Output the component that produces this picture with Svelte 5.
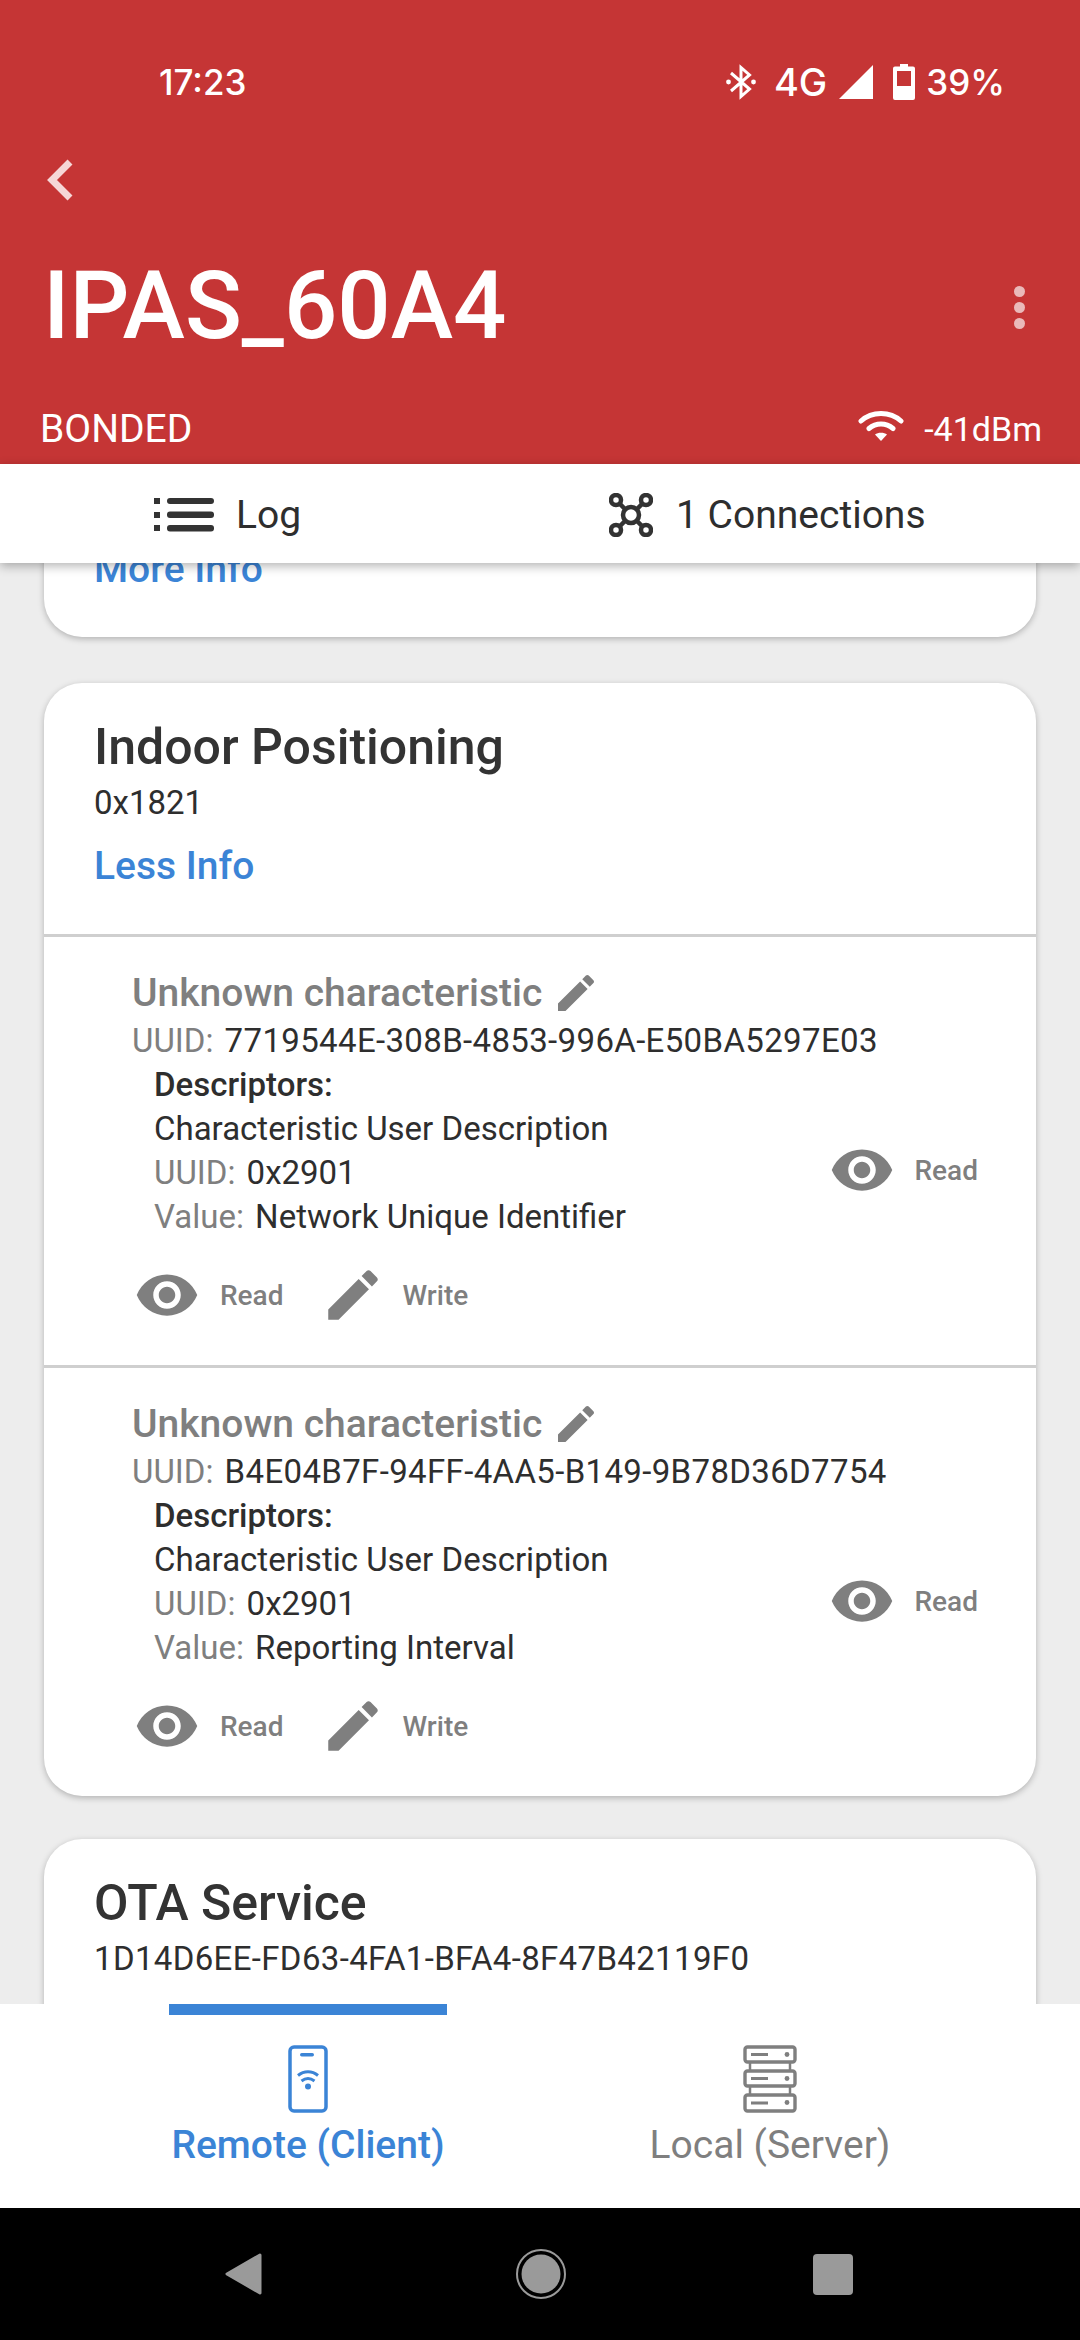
<script>
  const eye = "M12 4.5C7 4.5 2.73 7.61 1 12c1.73 4.39 6 7.5 11 7.5s9.27-3.11 11-7.5c-1.73-4.39-6-7.5-11-7.5zM12 17c-2.76 0-5-2.24-5-5s2.24-5 5-5 5 2.24 5 5-2.24 5-5 5zm0-8c-1.66 0-3 1.34-3 3s1.34 3 3 3 3-1.34 3-3-1.34-3-3-3z";
  const pencil = "M3 17.25V21h3.75L17.81 9.94l-3.75-3.75L3 17.25zM20.71 7.04c.39-.39.39-1.02 0-1.41l-2.34-2.34c-.39-.39-1.02-.39-1.41 0l-1.83 1.83 3.75 3.75 1.83-1.83z";
  const chars = [
    { uuid: "7719544E-308B-4853-996A-E50BA5297E03", value: "Network Unique Identifier" },
    { uuid: "B4E04B7F-94FF-4AA5-B149-9B78D36D7754", value: "Reporting Interval" }
  ];
</script>

<div class="phone">
  <header class="top">
    <div class="status">
      <span class="time">17:23</span>
      <div class="status-right">
        <svg class="bt" viewBox="0 0 30 36" width="30" height="36"><path d="M5 9 23.500 25 15 32.500V3.500L23.500 11 5 27" fill="none" stroke="#fff" stroke-width="3"/><circle cx="2.500" cy="18" r="2.400" fill="#fff"/><circle cx="27.500" cy="18" r="2.400" fill="#fff"/></svg>
        <span class="net">4G</span>
        <svg class="sig" viewBox="0 0 34 34" width="34" height="34"><path d="M0 34 34 0V34z" fill="#fff"/></svg>
        <svg class="bat" viewBox="0 0 22 36" width="22" height="36"><path fill-rule="evenodd" d="M7 0h8v2.500h5a2 2 0 0 1 2 2V34a2 2 0 0 1-2 2H2a2 2 0 0 1-2-2V4.500a2 2 0 0 1 2-2h5zM4 7v15h14V7z" fill="#fff"/></svg>
        <span class="pct">39%</span>
      </div>
    </div>
    <div class="back-row">
      <svg viewBox="0 0 32 44" width="32" height="44"><path d="M26 4 8 22l18 18" fill="none" stroke="#f6d7d7" stroke-width="7"/></svg>
    </div>
    <div class="title-row">
      <h1>IPAS_60A4</h1>
      <div class="dots"><i></i><i></i><i></i></div>
    </div>
    <div class="info-row">
      <span>BONDED</span>
      <div class="rssi">
        <svg viewBox="0 0 46 32" width="46" height="32"><path d="M3 11C14 1 32 1 43 11M11 18.500C18 12.500 28 12.500 35 18.500" fill="none" stroke="#fff" stroke-width="5" stroke-linecap="round"/><path d="M17 24.500C20 22 26 22 29 24.500L23 31z" fill="#fff"/></svg>
        <span>-41dBm</span>
      </div>
    </div>
  </header>

  <div class="actions">
    <div class="action log">
      <svg viewBox="0 0 60 34" width="60" height="34"><g fill="#333"><rect x="0" y="0" width="6" height="6"/><rect x="0" y="14" width="6" height="6"/><rect x="0" y="27" width="6" height="6"/><rect x="13" y="0" width="47" height="6" rx="3"/><rect x="13" y="13.500" width="47" height="6.500" rx="3"/><rect x="13" y="27" width="47" height="6.500" rx="3"/></g></svg>
      <span>Log</span>
    </div>
    <div class="action conn">
      <svg viewBox="0 0 44 44" width="44" height="44"><g fill="none" stroke="#333" stroke-width="4.500"><circle cx="7" cy="7" r="5"/><circle cx="37" cy="7" r="5"/><circle cx="7" cy="37" r="5"/><circle cx="37" cy="37" r="5"/><circle cx="22" cy="22" r="8"/><path d="M11 11l5 5M33 11l-5 5M11 33l5-5M33 33l-5-5"/></g></svg>
      <span>1 Connections</span>
    </div>
  </div>

  <main class="scroll">
    <section class="card first">
      <a class="link">More Info</a>
    </section>

    <section class="card">
      <div class="svc">
        <h2>Indoor Positioning</h2>
        <p class="svc-id">0x1821</p>
        <a class="link">Less Info</a>
      </div>
      {#each chars as c}
        <div class="char">
          <div class="char-name">
            <span>Unknown characteristic</span>
            <svg viewBox="0 0 24 24" width="48" height="48"><path d={pencil}/></svg>
          </div>
          <div class="line"><span class="k">UUID:</span> <span class="hex">{c.uuid}</span></div>
          <div class="desc-wrap">
            <div class="desc">
              <div class="line strong">Descriptors:</div>
              <div class="line">Characteristic User Description</div>
              <div class="line"><span class="k">UUID:</span> 0x2901</div>
              <div class="line"><span class="k">Value:</span> {c.value}</div>
            </div>
            <div class="op right">
              <svg viewBox="0 0 24 24" width="66" height="66"><path fill-rule="evenodd" d={eye}/></svg>
              <span>Read</span>
            </div>
          </div>
          <div class="ops">
            <div class="op">
              <svg viewBox="0 0 24 24" width="66" height="66"><path fill-rule="evenodd" d={eye}/></svg>
              <span>Read</span>
            </div>
            <div class="op wr">
              <svg viewBox="0 0 24 24" width="66" height="66"><path d={pencil}/></svg>
              <span>Write</span>
            </div>
          </div>
        </div>
      {/each}
    </section>

    <section class="card last">
      <div class="svc">
        <h2>OTA Service</h2>
        <p class="svc-id hex">1D14D6EE-FD63-4FA1-BFA4-8F47B42119F0</p>
      </div>
    </section>
  </main>

  <nav class="tabs">
    <div class="tab active">
      <b class="bar"></b>
      <svg viewBox="0 0 40 68" width="40" height="68"><g fill="none" stroke="#3b84d6"><rect x="2" y="2" width="36" height="64" rx="4" stroke-width="3.500"/></g><g fill="#3b84d6"><rect x="12" y="8" width="14" height="3.500" rx="1.700"/><circle cx="20" cy="41.500" r="3"/></g><path d="M10 30.500c6-5 14-5 20 0M13.500 36c4-3 9-3 13 0" fill="none" stroke="#3b84d6" stroke-width="3"/></svg>
      <span>Remote (Client)</span>
    </div>
    <div class="tab">
      <svg viewBox="0 0 54 68" width="54" height="68"><g fill="none" stroke="#7f7f7f" stroke-width="3.400"><rect x="2" y="2" width="50" height="15" rx="2.500"/><rect x="2" y="26" width="50" height="15" rx="2.500"/><rect x="2" y="50" width="50" height="16" rx="2.500"/><path d="M7 17v9M47 17v9M7 41v9M47 41v9" stroke-width="2.500"/></g><g fill="#7f7f7f"><rect x="8" y="8" width="17" height="3"/><rect x="8" y="32" width="17" height="3"/><rect x="8" y="56.500" width="17" height="3"/><circle cx="44" cy="9.500" r="2.400"/><circle cx="44" cy="33.500" r="2.400"/><circle cx="44" cy="57.500" r="2.400"/></g></svg>
      <span>Local (Server)</span>
    </div>
  </nav>

  <footer class="sys">
    <svg class="tri" viewBox="0 0 38 44" width="38" height="44"><path d="M36 3 3 22l33 19z" fill="#9a9a9a" stroke="#9a9a9a" stroke-width="3" stroke-linejoin="round"/></svg>
    <svg class="home" viewBox="0 0 50 50" width="50" height="50"><circle cx="25" cy="25" r="24" fill="none" stroke="#9a9a9a" stroke-width="2"/><circle cx="25" cy="25" r="19.500" fill="#9a9a9a"/></svg>
    <span class="sq"></span>
  </footer>
</div>

<style>
  :global(body) { margin: 0; }
  .phone {
    width: 1080px; height: 2340px; display: flex; flex-direction: column; overflow: hidden;
    background: #ededed; font-family: Roboto, "Liberation Sans", sans-serif; color: #2e2e2e;
  }
  .top { height: 464px; background: #c53535; color: #fff; flex: none; box-sizing: border-box; }
  .status { height: 64px; padding: 50px 75px 0 159px; display: flex; justify-content: space-between; align-items: center; font-family: Inter, Roboto, sans-serif; font-size: 35px; font-weight: 500; }
  .status-right { display: flex; align-items: center; }
  .bt { margin-right: 18px; }
  .net { font-size: 38px; }
  .sig { margin: 0 20px 0 12px; }
  .bat { margin-right: 11px; }
  .back-row { height: 44px; padding: 44px 0 0 44px; }
  .back-row svg { display: block; }
  .title-row { display: flex; justify-content: space-between; align-items: center; padding: 0 55px 0 43px; margin-top: 48px; height: 112px; }
  h1 { margin: 0; font-size: 94px; font-weight: 500; line-height: 112px; }
  .dots { display: flex; flex-direction: column; gap: 5px; margin-top: 3px; }
  .dots i { width: 11px; height: 11px; border-radius: 50%; background: #eab9b9; }
  .info-row { display: flex; justify-content: space-between; align-items: center; padding: 0 38px 0 40px; margin-top: 45px; font-size: 39px; line-height: 44px; }
  .rssi { display: flex; align-items: center; gap: 20px; font-size: 34px; }
  .rssi svg { margin-top: -6px; }
  .actions { height: 99px; flex: none; background: #fff; display: flex; position: relative; z-index: 2; box-shadow: 0 3px 10px rgba(0,0,0,.3); font-size: 39px; padding-top: 2px; box-sizing: border-box; }
  .action { display: flex; align-items: center; }
  .action svg { flex: none; }
  .log { padding-left: 154px; gap: 22px; width: 609px; box-sizing: border-box; }
  .conn { gap: 23px; }
  .scroll { flex: 1; min-height: 0; overflow: hidden; display: flex; flex-direction: column; gap: 46px; padding: 0 44px; }
  .card { background: #fff; border-radius: 38px; box-shadow: 0 2px 6px rgba(0,0,0,.25); flex: none; overflow: hidden; }
  .first { height: 120px; margin-top: -46px; box-sizing: border-box; padding: 0 50px; border-radius: 0 0 38px 38px; }
  .first .link { display: block; margin-top: 30px; }
  .last { margin-top: -3px; }
  .link { color: #3b84d6; font-size: 39px; line-height: 44px; font-weight: 500; }
  .svc { padding: 36px 50px 46px; }
  h2 { margin: 0; font-size: 50px; font-weight: 500; line-height: 56px; color: #333; }
  .svc-id { margin: 6px 0 19px; font-size: 33px; line-height: 44px; }
  .hex { letter-spacing: .35px; }
  .char { border-top: 3px solid #cfcfcf; padding: 30px 58px 0 88px; height: 431px; box-sizing: border-box; }
  .char-name { display: flex; align-items: center; height: 52px; gap: 10px; font-size: 39px; font-weight: 500; color: #7f7f7f; }
  .char-name svg { fill: #7f7f7f; }
  .line { font-size: 33px; line-height: 44px; color: #2e2e2e; white-space: nowrap; }
  .k { color: #7f7f7f; margin-right: 3px; }
  .strong { font-weight: 500; }
  .desc-wrap { display: flex; justify-content: space-between; align-items: center; padding-left: 22px; }
  .ops { display: flex; align-items: center; margin-top: 23px; margin-left: 2px; }
  .op { display: flex; align-items: center; font-size: 28px; font-weight: 500; color: #7f7f7f; gap: 20px; }
  .op svg { fill: #7f7f7f; flex: none; }
  .wr { margin-left: 36px; gap: 17px; }
  .right { margin-top: 38px; }
  .tabs { height: 204px; flex: none; display: flex; background: #fff; position: relative; z-index: 2; }
  .tab { position: relative; width: 308px; margin-left: 154px; display: flex; flex-direction: column; align-items: center; padding-top: 41px; box-sizing: border-box; font-size: 39px; color: #7f7f7f; }
  .tab svg { display: block; }
  .tab span { margin-top: 7px; line-height: 50px; white-space: nowrap; }
  .active { color: #3b84d6; font-weight: 500; }
  .bar { position: absolute; left: 15px; right: 15px; top: 0; height: 11px; background: #3b84d6; }
  .sys { height: 132px; flex: none; background: #000; display: flex; align-items: center; padding-left: 224px; }
  .home { margin-left: 254px; }
  .sq { width: 40px; height: 41px; margin-left: 247px; border-radius: 4px; background: #9a9a9a; }
</style>
